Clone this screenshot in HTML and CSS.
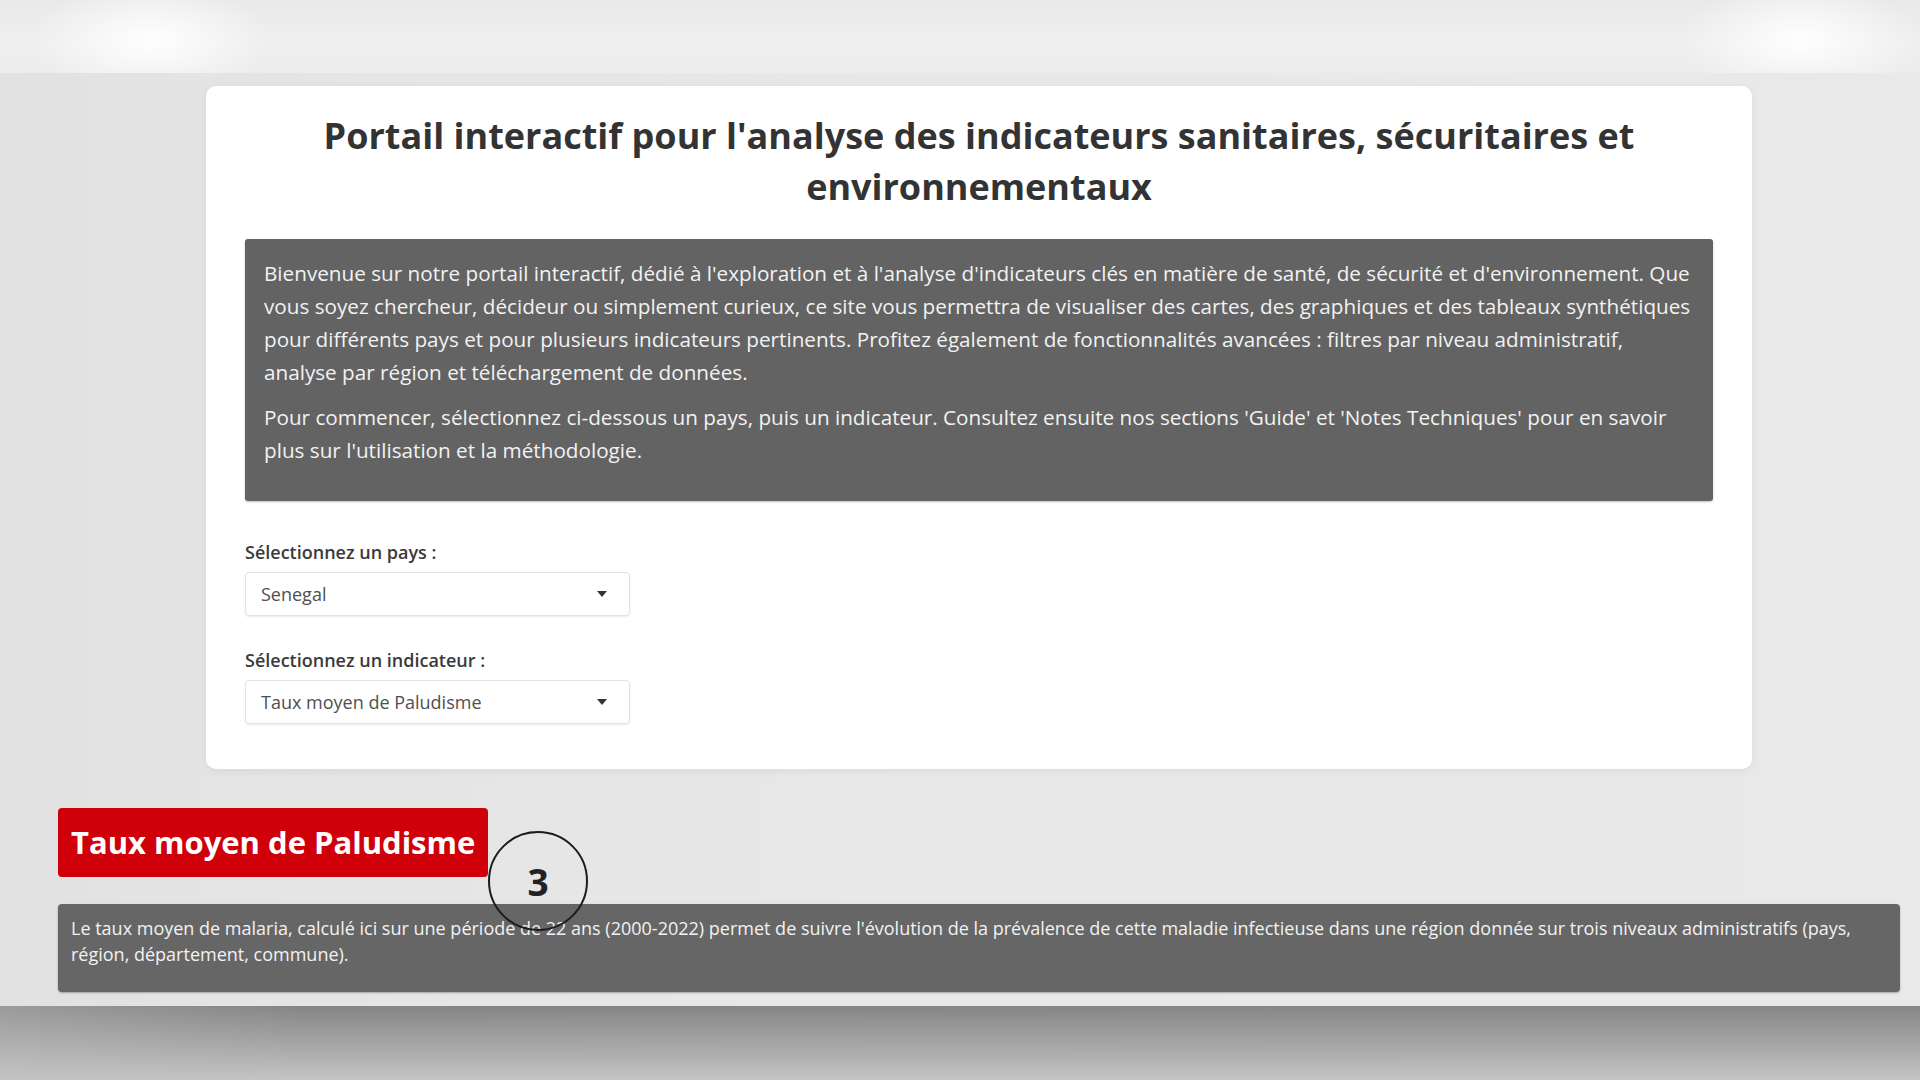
FILE: index.html
```html
<!DOCTYPE html>
<html lang="fr">
<head>
<meta charset="utf-8">
<title>Portail interactif</title>
<link rel="stylesheet" href="styles.css">
</head>
<body>
<div class="topband"></div>
<div class="main">
  <div class="card">
    <h1 class="title">Portail interactif pour l'analyse des indicateurs sanitaires, sécuritaires et environnementaux</h1>
    <div class="intro">
      <p>Bienvenue sur notre portail interactif, dédié à l'exploration et à l'analyse d'indicateurs clés en matière de santé, de sécurité et d'environnement. Que vous soyez chercheur, décideur ou simplement curieux, ce site vous permettra de visualiser des cartes, des graphiques et des tableaux synthétiques pour différents pays et pour plusieurs indicateurs pertinents. Profitez également de fonctionnalités avancées : filtres par niveau administratif, analyse par région et téléchargement de données.</p>
      <p>Pour commencer, sélectionnez ci-dessous un pays, puis un indicateur. Consultez ensuite nos sections 'Guide' et 'Notes Techniques' pour en savoir plus sur l'utilisation et la méthodologie.</p>
    </div>
    <div class="field">
      <label class="label">Sélectionnez un pays :</label>
      <div class="select"><span>Senegal</span><span class="caret"></span></div>
    </div>
    <div class="field">
      <label class="label">Sélectionnez un indicateur :</label>
      <div class="select"><span>Taux moyen de Paludisme</span><span class="caret"></span></div>
    </div>
  </div>
  <div class="section">
    <div class="headrow">
      <h2 class="redhead">Taux moyen de Paludisme</h2>
      <div class="badge">3</div>
    </div>
    <div class="desc">
      <p>Le taux moyen de malaria, calculé ici sur une période de 22 ans (2000-2022) permet de suivre l'évolution de la prévalence de cette maladie infectieuse dans une région donnée sur trois niveaux administratifs (pays, région, département, commune).</p>
    </div>
  </div>
</div>
<div class="bottomband"></div>
</body>
</html>
```

FILE: styles.css
```css
html, body {
  margin: 0;
  padding: 0;
}
body {
  width: 1920px;
  height: 1080px;
  overflow: hidden;
  font-family: "Open Sans", "Noto Sans", sans-serif;
  background: #e6e6e6;
}
.topband {
  height: 73px;
  background:
    radial-gradient(ellipse 120px 60px at 150px 40px, rgba(255,255,255,0.95), rgba(255,255,255,0) 100%),
    radial-gradient(ellipse 120px 60px at 1800px 40px, rgba(255,255,255,0.95), rgba(255,255,255,0) 100%),
    linear-gradient(to bottom, #e9e9e9, #efefef 60%, #ececec);
}
.main {
  height: 933px;
  padding-top: 13px;
  box-sizing: border-box;
  background: linear-gradient(to right, #e1e1e1 0px, #e4e4e4 200px, #e8e8e8 900px, #e9e9e9 1920px);
}
.card {
  margin-left: 206px;
  width: 1546px;
  height: 683px;
  box-sizing: border-box;
  background: #fff;
  border-radius: 10px;
  padding: 24px 39px 0;
  box-shadow: 0 2px 8px rgba(0,0,0,0.06);
}
.title {
  margin: 0 0 27px;
  text-align: center;
  font-size: 36px;
  line-height: 51px;
  font-weight: 700;
  color: #333;
}
.intro {
  background: #636363;
  border-radius: 3px;
  height: 262px;
  box-sizing: border-box;
  padding: 18px 19px 0;
  color: #f2f2f2;
  box-shadow: 0 1px 2px rgba(0,0,0,0.25);
}
.intro p {
  margin: 0 0 12px;
  font-size: 20.7px;
  line-height: 33px;
}
.field {
  margin-top: 39px;
}
.field + .field {
  margin-top: 32px;
}
.label {
  display: block;
  font-size: 18px;
  line-height: 24px;
  font-weight: 600;
  color: #3a3a3a;
  margin-bottom: 8px;
}
.select {
  width: 385px;
  height: 44px;
  box-sizing: border-box;
  border: 1px solid #e2e2e2;
  border-radius: 4px;
  box-shadow: 0 1px 2px rgba(0,0,0,0.08);
  display: flex;
  align-items: center;
  justify-content: space-between;
  padding: 0 22px 0 15px;
  font-size: 18px;
  color: #505050;
}
.caret {
  width: 0;
  height: 0;
  border-left: 5px solid transparent;
  border-right: 5px solid transparent;
  border-top: 6px solid #333;
}
.section {
  margin-top: 39px;
  padding-left: 58px;
  padding-right: 20px;
}
.headrow {
  position: relative;
  height: 69px;
}
.redhead {
  display: inline-block;
  margin: 0;
  height: 69px;
  box-sizing: border-box;
  padding: 0 13px;
  line-height: 69px;
  background: #d0000b;
  color: #fff;
  font-size: 31px;
  font-weight: 700;
  border-radius: 4px;
}
.badge {
  position: absolute;
  left: 430px;
  top: 23px;
  width: 100px;
  height: 100px;
  box-sizing: border-box;
  border: 2px solid #1c1c1c;
  border-radius: 50%;
  display: flex;
  align-items: center;
  justify-content: center;
  font-size: 37px;
  font-weight: 700;
  color: #222;
  z-index: 2;
}
.desc {
  margin-top: 27px;
  height: 88px;
  box-sizing: border-box;
  background: #666;
  border-radius: 4px;
  padding: 11px 13px 0;
  color: #f2f2f2;
  box-shadow: 0 1px 2px rgba(0,0,0,0.3);
}
.desc p {
  margin: 0;
  font-size: 18px;
  line-height: 26px;
}
.bottomband {
  position: absolute;
  left: 0;
  top: 1006px;
  width: 1920px;
  height: 74px;
  background:
    linear-gradient(to bottom, rgba(136,136,136,0) 0%, rgba(196,196,196,1) 100%),
    linear-gradient(to right, #9a9a9a 0px, #858585 300px, #868686 1920px);
}
```
